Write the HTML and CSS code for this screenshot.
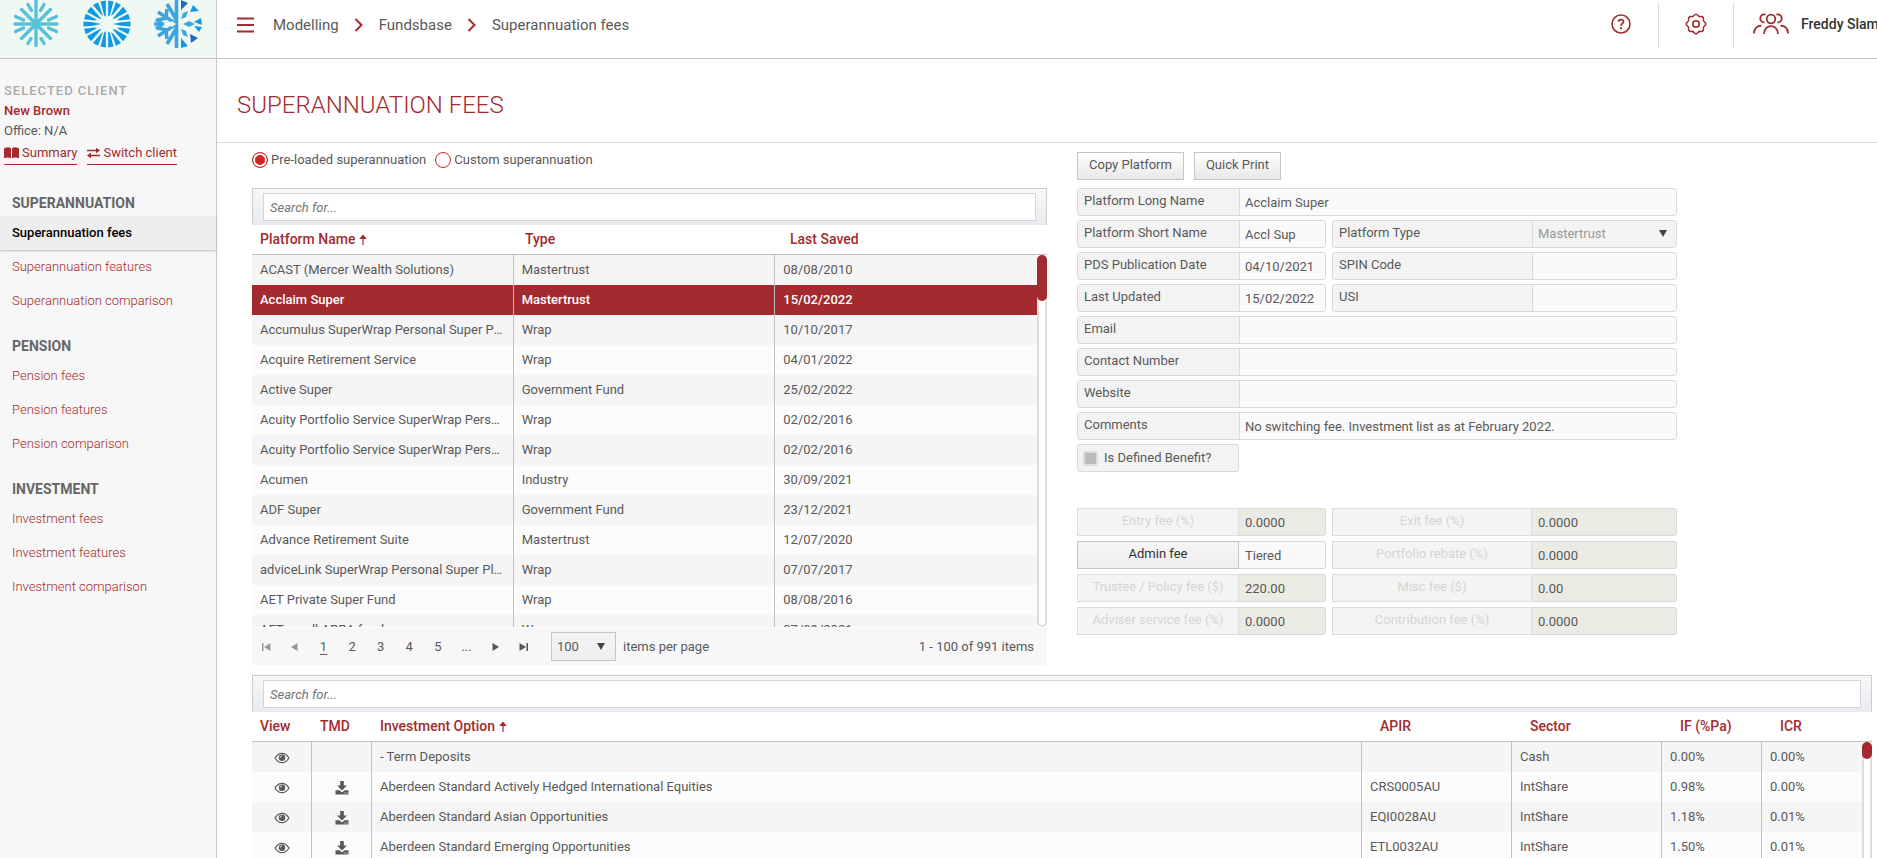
FILE: index.html
```
<!DOCTYPE html>
<html lang="en">
<head>
    <meta charset="UTF-8">
    <meta name="viewport" content="width=device-width, initial-scale=1.0">
    <title>Superannuation fees</title>
    <link rel="stylesheet" href="styles.css">
</head>
<body>
    <!-- Shared icons -->
    <svg class="sprite" aria-hidden="true">
        <symbol id="chevron" viewBox="0 0 10 14"><path d="M1.5 1l6 6-6 6" fill="none" stroke="currentColor" stroke-width="2"/></symbol>
        <symbol id="sort" viewBox="0 0 8 12"><path d="M4 11V2M1.500 4.500l2.500-3 2.500 3z" fill="currentColor" stroke="currentColor" stroke-width="1.200"/></symbol>
        <symbol id="eye" viewBox="0 0 16 12"><path d="M1 6C3 2.800 5.300 1.300 8 1.300S13 2.800 15 6c-2 3.200-4.300 4.700-7 4.700S3 9.200 1 6z" fill="none" stroke="currentColor" stroke-width="1.200"/><circle cx="8" cy="5.700" r="3.200" fill="currentColor"/><path d="M6.200 5.700A1.800 1.800 0 0 1 8 3.900" fill="none" stroke="#fff" stroke-width=".8"/></symbol>
        <symbol id="download" viewBox="0 0 14 14"><path d="M5.200 0h3.600v4.600h3.100L7 9.500 2.100 4.600h3.100zM.5 9.300h4L7 11.500l2.500-2.200h4V13.500H.5z" fill="currentColor"/><path d="M9.500 12h1M11.500 12h1" stroke="#fff" stroke-width=".9"/></symbol>
    </svg>

    <div class="app">
        <aside class="sidebar">
            <div class="logos">
                <svg class="logo" viewBox="-24 -24 48 48" role="img" aria-label="Teal snowflake">
                    <g stroke="#55c2d6" stroke-width="3.400" stroke-linecap="round" fill="none">
                        <path d="M0-23V-6L-1 0M0 21.500V6L1 0M-21 0H-3M5 0H21M-14.500-14.500L-1-1L5 0M14.500-14.500L1-1M-14.500 14.500L-1 1M14.500 14.500L1 1"/>
                        <path d="M-20.500-7.500l8 3.500M-20.500 7.500l8-3.500M20.500-7.500l-8 3.500M20.500 7.500l-8-3.500M-8-19.500l3.500 6M8-19.500l-3.500 6M-8 19.500l3-5M8 19.500l-3-5"/>
                    </g>
                </svg>
                <svg class="logo" viewBox="-24 -24 48 48" role="img" aria-label="Blue snowflake">
                    <g fill="#0e9be5">
                        <g id="quarter">
                            <path d="M-1.200-23.500V-7L-3-9L-6.500-22.600z"/>
                            <path d="M-9-21.700L-4-8L-6-9.500L-14-18.900z"/>
                            <path d="M-16-17.200L-5.500-5L-8-5.500L-20-12.300z"/>
                            <path d="M-21.200-10.200L-10-4.300L-13-3.500L-23-4.800z"/>
                            <path d="M-23.400-2.500L-14-1.800L-6 0H-23.500z"/>
                        </g>
                        <use href="#quarter" transform="scale(-1 1)"/>
                        <use href="#quarter" transform="scale(1 -1)"/>
                        <use href="#quarter" transform="scale(-1 -1)"/>
                    </g>
                </svg>
                <svg class="logo" viewBox="-24 -24 48 48" role="img" aria-label="Two-tone snowflake">
                    <g stroke="#3ba5df" stroke-width="3.600" fill="none">
                        <path d="M-1.500-24V24M-24 0H-14M-20-12L-3-1M-20 12L-3 1M-11-20L-2-5M-11 20L-2 5"/>
                        <path d="M-22-5l6 5-6 5M-20-4l8-2 1-9M-20 4l8 2 1 9"/>
                    </g>
                    <path d="M-11 0l5-3 4 3-4 3z" fill="#f0f8f4"/>
                    <g fill="#3ba5df">
                        <path d="M5 0l6-3 6 3-6 3zM3-5l2-6 5-2-2 6zM3 5l2 6 5 2-2-6z"/>
                    </g>
                    <g fill="#0e9be5">
                        <path d="M12-12l3-7 6 6zM16-2l7-4 1 7zM16 2l8 1-3 5zM3 14l7 8-7 2z"/>
                    </g>
                    <g fill="#1f6bba">
                        <path d="M3-24l7 3-7 7zM12 10l8 4-7 5z"/>
                    </g>
                </svg>
            </div>

            <div class="client">
                <p class="client-label">Selected client</p>
                <p class="client-name">New Brown</p>
                <p>Office: N/A</p>
                <div class="client-links">
                    <a href="#">
                        <svg width="15" height="12" viewBox="0 0 15 12"><path d="M0 1.500C2.500 0 5 0 7 1.200V11.500C5 10.300 2.500 10.300 0 11.200zM8 1.200C10 0 12.500 0 15 1.500V11.200C12.500 10.300 10 10.300 8 11.500z" fill="currentColor"/></svg>
                        Summary
                    </a>
                    <a href="#">
                        <svg width="13" height="12" viewBox="0 0 13 12"><path d="M0 3.500H10M3 8.500H13" stroke="currentColor" stroke-width="1.600"/><path d="M9 .8L13 3.500 9 6.200zM4 5.800L0 8.500l4 2.700z" fill="currentColor"/></svg>
                        Switch client
                    </a>
                </div>
            </div>

            <nav class="side-nav">
                <section>
                    <h2>Superannuation</h2>
                    <a class="active" href="#">Superannuation fees</a>
                    <a href="#">Superannuation features</a>
                    <a href="#">Superannuation comparison</a>
                </section>
                <section>
                    <h2>Pension</h2>
                    <a href="#">Pension fees</a>
                    <a href="#">Pension features</a>
                    <a href="#">Pension comparison</a>
                </section>
                <section>
                    <h2>Investment</h2>
                    <a href="#">Investment fees</a>
                    <a href="#">Investment features</a>
                    <a href="#">Investment comparison</a>
                </section>
            </nav>
        </aside>

        <div class="page">
            <header class="topbar">
                <nav class="breadcrumb">
                    <button class="menu-button" type="button" aria-label="Menu">
                        <svg width="17" height="16" viewBox="0 0 17 16"><path d="M0 1.500h17M0 8h17M0 14.500h17" stroke="currentColor" stroke-width="2"/></svg>
                    </button>
                    <a href="#">Modelling</a>
                    <svg class="chevron"><use href="#chevron"/></svg>
                    <a href="#">Fundsbase</a>
                    <svg class="chevron"><use href="#chevron"/></svg>
                    <a href="#">Superannuation fees</a>
                </nav>
                <div class="tools">
                    <button type="button" aria-label="Help">
                        <svg width="22" height="22" viewBox="0 0 22 22" fill="none" stroke="currentColor"><circle cx="11" cy="11" r="9" stroke-width="1.600"/><path d="M8.500 8.800C8.500 5.800 13.500 5.800 13.500 8.700C13.500 10.500 11 10.500 11 12.800" stroke-width="1.700"/><path d="M11 14.300v2" stroke-width="2"/></svg>
                    </button>
                    <button type="button" aria-label="Settings">
                        <svg width="22" height="22" viewBox="-11 -11 22 22" fill="none" stroke="currentColor" stroke-width="1.600" stroke-linejoin="round"><path d="M-2-8.500Q0-11 2-8.500Q3.200-7.100 4.600-7.400Q7.700-7.800 7.400-4.600Q7.100-3.200 8.500-2Q11 0 8.500 2Q7.100 3.200 7.400 4.600Q7.700 7.800 4.600 7.400Q3.200 7.100 2 8.500Q0 11-2 8.500Q-3.200 7.100-4.600 7.400Q-7.700 7.800-7.400 4.600Q-7.100 3.200-8.500 2Q-11 0-8.500-2Q-7.100-3.200-7.400-4.600Q-7.700-7.800-4.600-7.400Q-3.200-7.100-2-8.500z"/><circle r="3.200"/></svg>
                    </button>
                    <button class="user" type="button">
                        <svg width="36" height="22" viewBox="0 0 36 22" fill="none" stroke="currentColor" stroke-width="1.800"><circle cx="18" cy="6" r="4.300"/><path d="M11 21C11 10.500 25 10.500 25 21M12.500 1.500C6 0 5.500 9.500 11.500 9.500M23.500 1.500C30 0 30.500 9.500 24.500 9.500M1 20.500C1 15.500 4 12.700 8.500 12.700M35 20.500C35 15.500 32 12.700 27.500 12.700"/></svg>
                        Freddy Slam
                    </button>
                </div>
            </header>

            <h1>Superannuation fees</h1>

            <main class="content">
                <div class="columns">
                    <div class="platforms">
                        <div class="radios">
                            <label><input type="radio" name="source" checked>Pre-loaded superannuation</label>
                            <label><input type="radio" name="source">Custom superannuation</label>
                        </div>

                        <div class="grid">
                            <div class="grid-toolbar"><input type="text" placeholder="Search for..." aria-label="Search platforms"></div>
                            <table class="grid-head">
                                <thead>
                                    <tr>
                                        <th>Platform Name <svg class="sort"><use href="#sort"/></svg></th>
                                        <th>Type</th>
                                        <th>Last Saved</th>
                                    </tr>
                                </thead>
                            </table>
                            <div class="grid-body platform-body">
                                <table>
                                    <tbody>
                                        <tr><td>ACAST (Mercer Wealth Solutions)</td><td>Mastertrust</td><td>08/08/2010</td></tr>
                                        <tr class="selected"><td>Acclaim Super</td><td>Mastertrust</td><td>15/02/2022</td></tr>
                                        <tr><td>Accumulus SuperWrap Personal Super Plan</td><td>Wrap</td><td>10/10/2017</td></tr>
                                        <tr><td>Acquire Retirement Service</td><td>Wrap</td><td>04/01/2022</td></tr>
                                        <tr><td>Active Super</td><td>Government Fund</td><td>25/02/2022</td></tr>
                                        <tr><td>Acuity Portfolio Service SuperWrap Personal</td><td>Wrap</td><td>02/02/2016</td></tr>
                                        <tr><td>Acuity Portfolio Service SuperWrap Personal</td><td>Wrap</td><td>02/02/2016</td></tr>
                                        <tr><td>Acumen</td><td>Industry</td><td>30/09/2021</td></tr>
                                        <tr><td>ADF Super</td><td>Government Fund</td><td>23/12/2021</td></tr>
                                        <tr><td>Advance Retirement Suite</td><td>Mastertrust</td><td>12/07/2020</td></tr>
                                        <tr><td>adviceLink SuperWrap Personal Super Plan</td><td>Wrap</td><td>07/07/2017</td></tr>
                                        <tr><td>AET Private Super Fund</td><td>Wrap</td><td>08/08/2016</td></tr>
                                        <tr><td>AET small APRA fund</td><td>Wrap</td><td>07/09/2021</td></tr>
                                    </tbody>
                                </table>
                                <div class="scrollbar"><div class="thumb"></div></div>
                            </div>
                            <div class="pager">
                                <div class="pager-buttons">
                                    <button type="button" disabled aria-label="First page"><svg width="9" height="8" viewBox="0 0 9 8"><path d="M0 0h1.500v8H0zM8.500 0v8L2 4z" fill="currentColor"/></svg></button>
                                    <button type="button" disabled aria-label="Previous page"><svg width="7" height="8" viewBox="0 0 7 8"><path d="M6.500 0v8L0 4z" fill="currentColor"/></svg></button>
                                    <button class="current" type="button">1</button>
                                    <button type="button">2</button>
                                    <button type="button">3</button>
                                    <button type="button">4</button>
                                    <button type="button">5</button>
                                    <button type="button">...</button>
                                    <button type="button" aria-label="Next page"><svg width="7" height="8" viewBox="0 0 7 8"><path d="M.5 0v8L7 4z" fill="currentColor"/></svg></button>
                                    <button type="button" aria-label="Last page"><svg width="9" height="8" viewBox="0 0 9 8"><path d="M7.500 0H9v8H7.500zM.5 0v8L7 4z" fill="currentColor"/></svg></button>
                                </div>
                                <div class="select page-size">
                                    <select id="page-size"><option>100</option></select>
                                </div>
                                <label for="page-size">items per page</label>
                                <span class="pager-info">1 - 100 of 991 items</span>
                            </div>
                        </div>
                    </div>

                    <div class="details">
                        <div class="actions">
                            <button type="button">Copy Platform</button>
                            <button type="button">Quick Print</button>
                        </div>

                        <form class="form">
                            <div class="field wide"><label for="long-name">Platform Long Name</label><input id="long-name" type="text" value="Acclaim Super"></div>
                            <div class="field"><label for="short-name">Platform Short Name</label><input id="short-name" type="text" value="Accl Sup"></div>
                            <div class="field second">
                                <label for="platform-type">Platform Type</label>
                                <div class="select"><select id="platform-type" disabled><option>Mastertrust</option></select></div>
                            </div>
                            <div class="field"><label for="pds-date">PDS Publication Date</label><input id="pds-date" type="text" value="04/10/2021"></div>
                            <div class="field second"><label for="spin">SPIN Code</label><input id="spin" type="text"></div>
                            <div class="field"><label for="updated">Last Updated</label><input id="updated" type="text" value="15/02/2022"></div>
                            <div class="field second"><label for="usi">USI</label><input id="usi" type="text"></div>
                            <div class="field wide"><label for="email">Email</label><input id="email" type="text"></div>
                            <div class="field wide"><label for="contact">Contact Number</label><input id="contact" type="text"></div>
                            <div class="field wide"><label for="website">Website</label><input id="website" type="text"></div>
                            <div class="field wide"><label for="comments">Comments</label><input id="comments" type="text" value="No switching fee. Investment list as at February 2022."></div>
                            <label class="check"><input type="checkbox" disabled>Is Defined Benefit?</label>
                        </form>

                        <form class="form fees">
                            <div class="fee"><button type="button" disabled>Entry fee (%)</button><input type="text" value="0.0000" aria-label="Entry fee" disabled></div>
                            <div class="fee second"><button type="button" disabled>Exit fee (%)</button><input type="text" value="0.0000" aria-label="Exit fee" disabled></div>
                            <div class="fee"><button type="button">Admin fee</button><input type="text" value="Tiered" aria-label="Admin fee"></div>
                            <div class="fee second"><button type="button" disabled>Portfolio rebate (%)</button><input type="text" value="0.0000" aria-label="Portfolio rebate" disabled></div>
                            <div class="fee"><button type="button" disabled>Trustee / Policy fee ($)</button><input type="text" value="220.00" aria-label="Trustee or policy fee" disabled></div>
                            <div class="fee second"><button type="button" disabled>Misc fee ($)</button><input type="text" value="0.00" aria-label="Misc fee" disabled></div>
                            <div class="fee"><button type="button" disabled>Adviser service fee (%)</button><input type="text" value="0.0000" aria-label="Adviser service fee" disabled></div>
                            <div class="fee second"><button type="button" disabled>Contribution fee (%)</button><input type="text" value="0.0000" aria-label="Contribution fee" disabled></div>
                        </form>
                    </div>
                </div>

                <div class="grid investments">
                    <div class="grid-toolbar"><input type="text" placeholder="Search for..." aria-label="Search investments"></div>
                    <table class="grid-head">
                        <colgroup><col class="col-icon"><col class="col-icon"><col><col class="col-code"><col class="col-code"><col class="col-rate"><col class="col-rate"></colgroup>
                        <thead>
                            <tr>
                                <th>View</th>
                                <th>TMD</th>
                                <th>Investment Option <svg class="sort"><use href="#sort"/></svg></th>
                                <th>APIR</th>
                                <th>Sector</th>
                                <th>IF (%Pa)</th>
                                <th>ICR</th>
                            </tr>
                        </thead>
                    </table>
                    <div class="grid-body">
                        <table>
                            <colgroup><col class="col-icon"><col class="col-icon"><col><col class="col-code"><col class="col-code"><col class="col-rate"><col class="col-rate"></colgroup>
                            <tbody>
                                <tr>
                                    <td class="icon"><svg class="eye"><use href="#eye"/></svg></td>
                                    <td class="icon"></td>
                                    <td>- Term Deposits</td><td></td><td>Cash</td><td>0.00%</td><td>0.00%</td>
                                </tr>
                                <tr>
                                    <td class="icon"><svg class="eye"><use href="#eye"/></svg></td>
                                    <td class="icon"><svg class="download"><use href="#download"/></svg></td>
                                    <td>Aberdeen Standard Actively Hedged International Equities</td><td>CRS0005AU</td><td>IntShare</td><td>0.98%</td><td>0.00%</td>
                                </tr>
                                <tr>
                                    <td class="icon"><svg class="eye"><use href="#eye"/></svg></td>
                                    <td class="icon"><svg class="download"><use href="#download"/></svg></td>
                                    <td>Aberdeen Standard Asian Opportunities</td><td>EQI0028AU</td><td>IntShare</td><td>1.18%</td><td>0.01%</td>
                                </tr>
                                <tr>
                                    <td class="icon"><svg class="eye"><use href="#eye"/></svg></td>
                                    <td class="icon"><svg class="download"><use href="#download"/></svg></td>
                                    <td>Aberdeen Standard Emerging Opportunities</td><td>ETL0032AU</td><td>IntShare</td><td>1.50%</td><td>0.01%</td>
                                </tr>
                            </tbody>
                        </table>
                        <div class="scrollbar"><div class="thumb"></div></div>
                    </div>
                </div>
            </main>
        </div>
    </div>
</body>
</html>
```
FILE: styles.css
```
* {
    box-sizing: border-box;
}

body {
    margin: 0;
    font-family: Roboto, "Liberation Sans", sans-serif;
    font-size: 13px;
    line-height: 20px;
    color: #595959;
    background-color: #fff;
}

a {
    color: #a32a2e;
    text-decoration: none;
}

button,
input,
select {
    font: inherit;
    color: inherit;
    margin: 0;
}

button {
    cursor: pointer;
}

svg {
    flex-shrink: 0;
}

.sprite {
    display: none;
}

.app {
    display: flex;
    height: 100vh;
    overflow: hidden;
}

/* Sidebar */
.sidebar {
    flex: 0 0 217px;
    background-color: #f7f7f7;
    border-right: 1px solid #c8c8c8;
}

.logos {
    display: flex;
    gap: 23px;
    height: 59px;
    padding-left: 12px;
    background-color: #f0f8f4;
    border-bottom: 1px solid #c1c1c1;
}

.logo {
    width: 48px;
    height: 48px;
}

.client {
    padding: 22px 4px 0;
}

.client p {
    margin: 0;
}

.client .client-label {
    font-weight: 500;
    letter-spacing: 1px;
    text-transform: uppercase;
    color: #aaa;
}

.client .client-name {
    font-weight: 500;
    color: #a32a2e;
}

.client-links {
    display: flex;
    gap: 10px;
}

.client-links a {
    display: flex;
    align-items: center;
    gap: 3px;
    height: 24px;
    border-bottom: 1px solid #a32a2e;
}

.side-nav {
    display: flex;
    flex-direction: column;
    gap: 16px;
    padding-top: 26px;
}

.side-nav h2 {
    margin: 0 0 1px;
    padding-left: 12px;
    font-size: 14px;
    line-height: 24px;
    font-weight: 700;
    text-transform: uppercase;
    color: #666;
}

.side-nav a {
    display: block;
    padding-left: 12px;
    line-height: 34px;
    font-weight: 300;
}

.side-nav .active {
    font-weight: 500;
    color: #000;
    background-color: #eee;
    box-shadow: 0 1px 2px #bbb;
}

/* Top bar */
.page {
    flex: 1;
    min-width: 0;
}

.topbar {
    display: flex;
    justify-content: space-between;
    height: 59px;
    padding-left: 20px;
    border-bottom: 1px solid #c1c1c1;
}

.breadcrumb {
    display: flex;
    align-items: center;
    height: 49px;
    font-size: 15px;
}

.breadcrumb a {
    color: #595959;
}

.menu-button {
    display: flex;
    padding: 0;
    margin-right: 19px;
    border: 0;
    background: none;
    color: #a32a2e;
}

.chevron {
    width: 10px;
    height: 14px;
    margin: 0 15px;
    color: #a32a2e;
}

.tools {
    display: flex;
    align-items: center;
    height: 45px;
    margin-top: 3px;
}

.tools button {
    display: flex;
    align-items: center;
    justify-content: center;
    width: 75px;
    height: 45px;
    padding: 0 0 3px;
    border: 0;
    border-right: 1px solid #ddd;
    background: none;
    color: #a32a2e;
}

.tools .user {
    justify-content: flex-start;
    gap: 12px;
    width: 143px;
    padding-left: 19px;
    border-right: 0;
    overflow: hidden;
    white-space: nowrap;
    font-size: 14px;
    font-weight: 500;
    color: #333;
}

.user svg {
    color: #a32a2e;
}

h1 {
    margin: 0;
    padding: 30px 20px 21px;
    font-size: 24px;
    line-height: 32px;
    font-weight: 300;
    text-transform: uppercase;
    color: #a32a2e;
    border-bottom: 1px solid #ddd;
}

/* Content */
.content {
    padding: 9px 5px 0 35px;
}

.columns {
    display: grid;
    grid-template-columns: 1fr 1fr;
    gap: 30px;
    margin-bottom: 10px;
}

.radios {
    display: flex;
    gap: 9px;
    height: 36px;
}

.radios label {
    display: flex;
    align-items: center;
    gap: 3px;
    height: 16px;
}

.radios input {
    appearance: none;
    width: 16px;
    height: 16px;
    border: 1px solid #d3232a;
    border-radius: 50%;
    background-color: #fff;
}

.radios input:checked {
    background-color: #d3232a;
    box-shadow: inset 0 0 0 2px #fff;
}

/* Grids */
.grid-toolbar {
    display: flex;
    height: 37px;
    padding: 4px 10px;
    border: 1px solid #ccc;
    border-bottom: 0;
    background: linear-gradient(#f7f8fa, #e9eaef);
}

.grid-toolbar input {
    flex: 1;
    height: 28px;
    padding: 0 6px;
    border: 1px solid #d5d5d5;
    background-color: #fff;
}

.grid-toolbar input::placeholder {
    font-style: italic;
    color: #757575;
}

.grid table {
    width: 100%;
    table-layout: fixed;
    border-collapse: separate;
    border-spacing: 0;
}

.grid th {
    height: 30px;
    padding: 0 8px 2px;
    border-bottom: 1px solid #c1c1c1;
    font-size: 14px;
    font-weight: 500;
    text-align: left;
    white-space: nowrap;
    color: #a32a2e;
}

.sort {
    width: 8px;
    height: 12px;
    vertical-align: -2px;
}

.grid-body {
    display: flex;
    overflow: hidden;
}

.platform-body {
    height: 372px;
}

.grid-body table {
    flex: 1;
    align-self: flex-start;
}

.grid td {
    height: 30px;
    padding: 0 8px;
    border-right: 1px solid #c1c1c1;
    overflow: hidden;
    text-overflow: ellipsis;
    white-space: nowrap;
}

.grid td:last-child {
    border-right: 0;
}

.grid tbody tr {
    background-color: #fcfcfc;
}

.grid tbody tr:nth-child(odd) {
    background-color: #f5f5f5;
}

.grid tbody .selected {
    font-weight: 500;
    color: #fff;
    background-color: #a32a2e;
}

.grid .icon {
    text-align: center;
}

.icon svg {
    display: inline-block;
    vertical-align: middle;
}

.eye {
    width: 16px;
    height: 12px;
}

.download {
    width: 14px;
    height: 14px;
}

.col-icon {
    width: 60px;
}

.col-code {
    width: 150px;
}

.col-rate {
    width: 100px;
}

.scrollbar {
    flex: 0 0 10px;
    border: 2px solid #ddd;
    border-top: 0;
    border-radius: 5px;
}

.thumb {
    height: 46px;
    margin: 0 -2px;
    border-radius: 5px;
    background-color: #a32a2e;
}

.investments .thumb {
    height: 17px;
}

/* Pager */
.pager {
    display: flex;
    align-items: center;
    height: 37px;
    margin-top: 1px;
    padding-right: 13px;
    background-color: #f7f7f7;
}

.pager-buttons {
    display: flex;
    width: 286px;
    margin-right: 13px;
}

.pager-buttons button {
    flex: 1;
    padding: 0;
    border: 0;
    background: none;
}

.pager-buttons button:disabled {
    color: #999;
}

.pager-buttons .current {
    text-decoration: underline;
    text-underline-offset: 3px;
}

.pager-info {
    margin-left: auto;
}

.select {
    position: relative;
}

.select::after {
    content: "";
    position: absolute;
    right: 10px;
    top: 50%;
    margin-top: -4px;
    border: 4px solid transparent;
    border-top: 7px solid #444;
    border-bottom: 0;
    pointer-events: none;
}

.select select {
    appearance: none;
    display: block;
    width: 100%;
    height: 100%;
    padding: 0 5px;
    border: 0;
    border-radius: 0;
    background: none;
    opacity: 1;
}

.page-size {
    width: 65px;
    height: 29px;
    margin-right: 7px;
    border: 1px solid #c5c5c5;
    background: linear-gradient(#f5f5f5, #eee);
}

/* Platform details */
.actions {
    display: flex;
    gap: 10px;
    margin-bottom: 8px;
}

.actions button {
    height: 28px;
    padding: 0 11px 2px;
    border: 1px solid #c5c5c5;
    background: linear-gradient(#fff, #e8e8e8);
}

.form {
    display: grid;
    grid-template-columns: 249fr 345fr;
    gap: 4px 6px;
    max-width: 600px;
}

.wide {
    grid-column: 1 / -1;
}

.field {
    display: flex;
    height: 28px;
    border: 1px solid #d9d9d9;
    border-radius: 3px;
    background-color: #fafafa;
    overflow: hidden;
}

.field label {
    flex: 0 0 162px;
    padding: 2px 6px;
    border-right: 1px solid #d9d9d9;
    background-color: #f3f3f3;
}

.field input {
    flex: 1;
    min-width: 0;
    padding: 1px 5px 0;
    border: 0;
    background: none;
}

.second label {
    flex-basis: 200px;
}

.field .select {
    flex: 1;
    background-color: #f3f3f3;
}

.field select:disabled {
    color: #999;
}

.field .select::after {
    right: 9px;
}

.check {
    display: flex;
    align-items: center;
    gap: 6px;
    width: 162px;
    height: 28px;
    padding: 0 5px;
    border: 1px solid #d9d9d9;
    border-radius: 3px;
    background-color: #f3f3f3;
}

.check input {
    appearance: none;
    width: 15px;
    height: 15px;
    border: 2px solid #ddd;
    border-radius: 3px;
    background-color: #bbb;
}

.fees {
    margin-top: 36px;
    row-gap: 5px;
}

.fee {
    display: flex;
    min-width: 0;
    height: 28px;
}

.fee button {
    flex: 0 0 162px;
    padding: 0 0 2px;
    border: 1px solid #c5c5c5;
    background: linear-gradient(#f5f5f5, #eee);
    color: #333;
}

.fee.second button {
    flex-basis: 200px;
}

.fee button:disabled {
    border-color: #ddd;
    background: #f4f4f4;
    color: #d5d5d5;
}

.fee input {
    flex: 1;
    min-width: 0;
    padding: 1px 6px 0;
    border: 1px solid #d9d9d9;
    border-left: 0;
    border-radius: 0 3px 3px 0;
    background-color: #fafafa;
}

.fee input:disabled {
    background-color: #ebebe4;
}
```
